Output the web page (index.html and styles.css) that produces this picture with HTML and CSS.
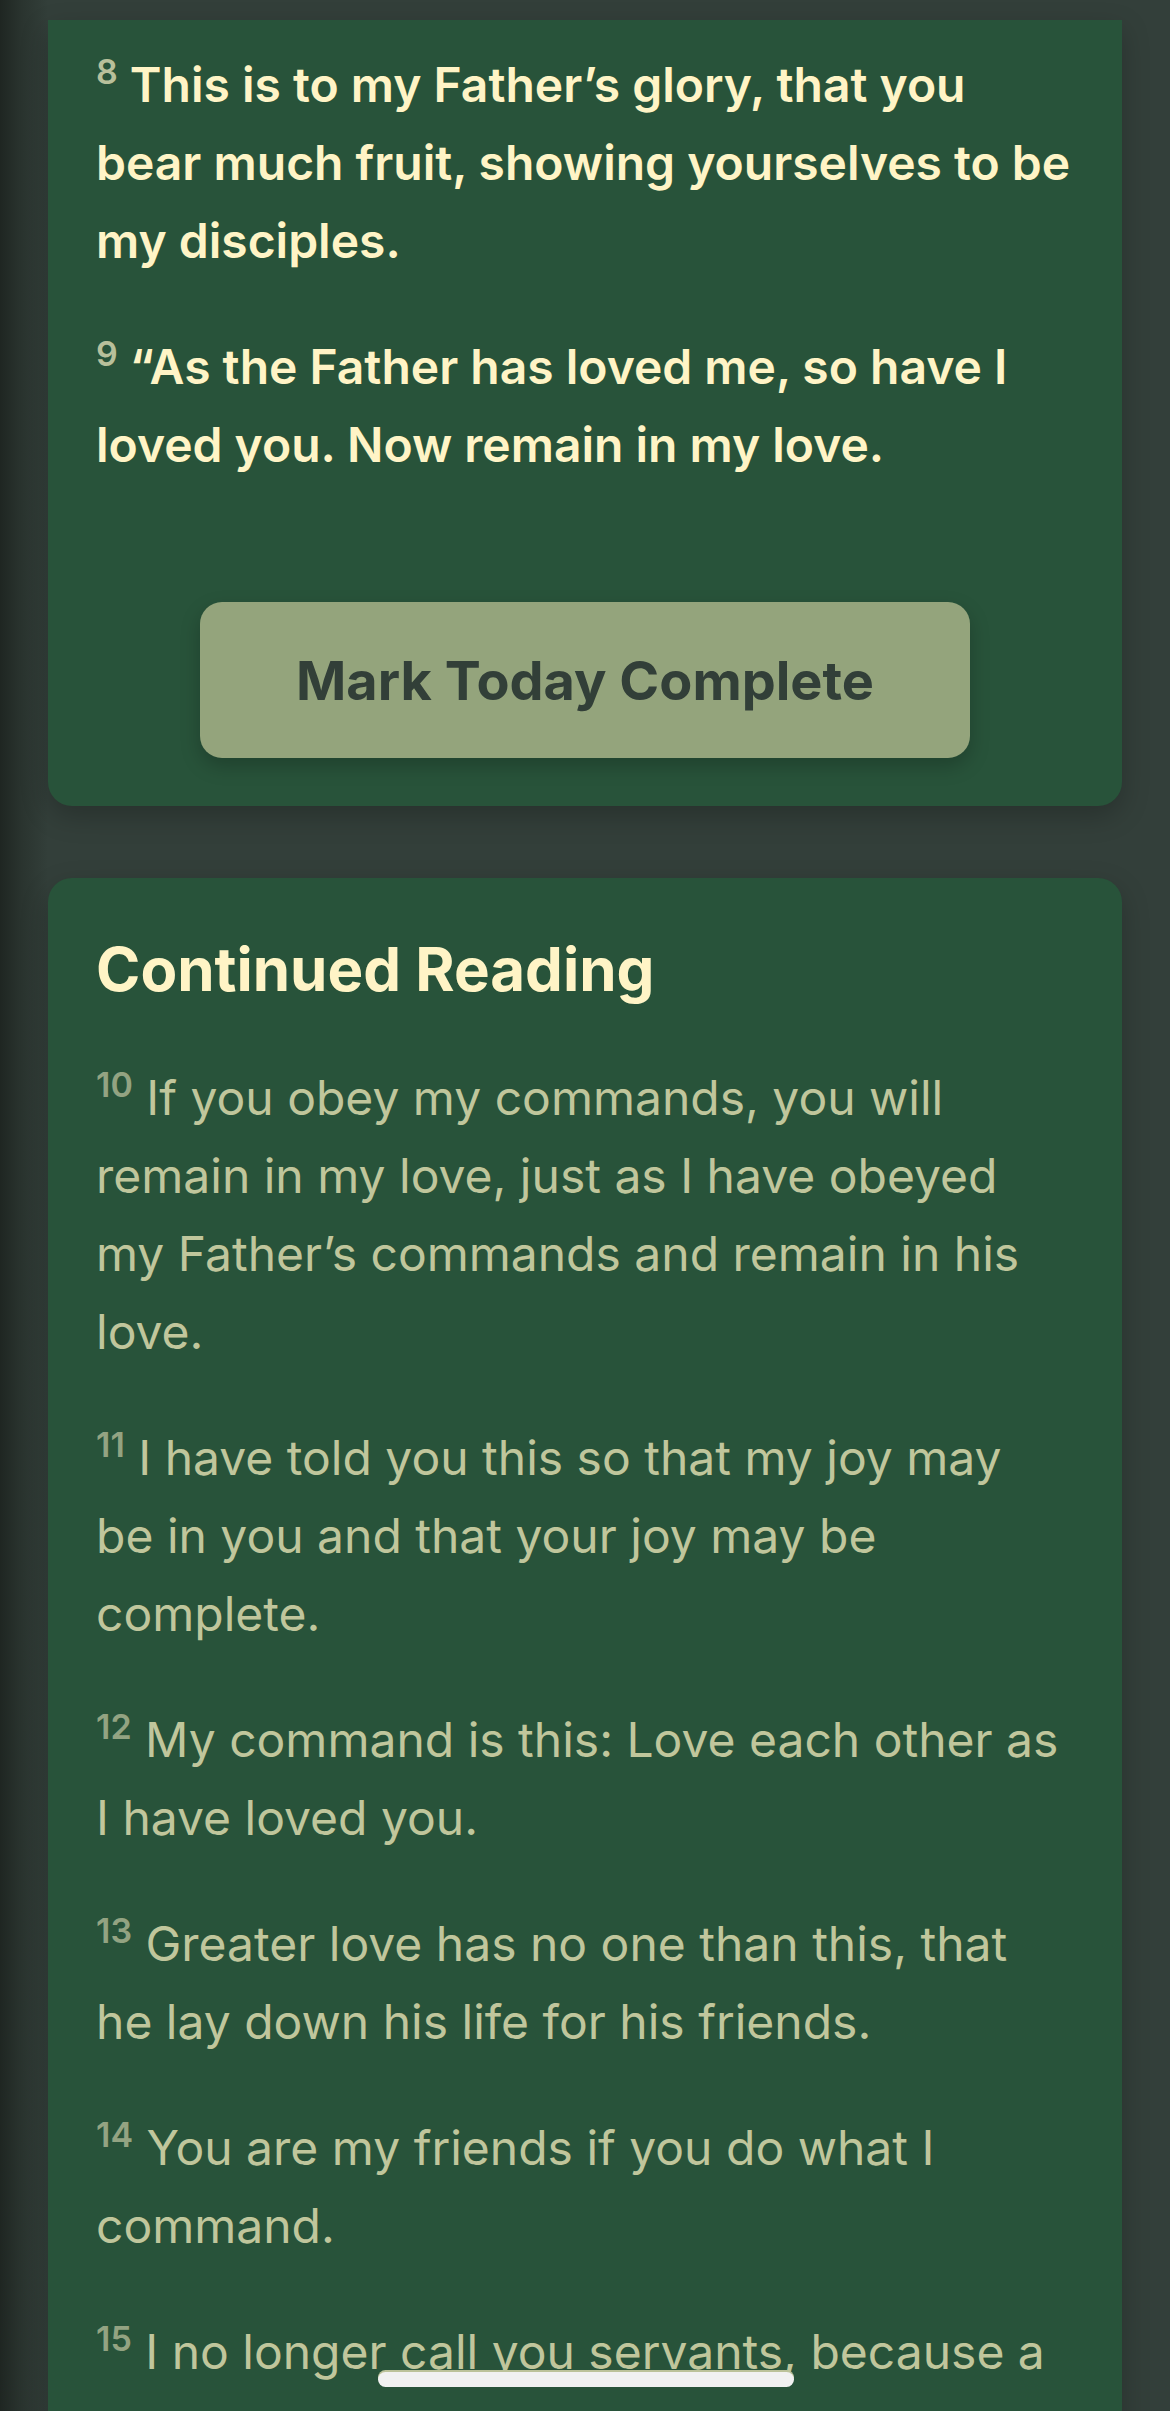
FILE: index.html
```html
<!DOCTYPE html>
<html lang="en">
<head>
<meta charset="utf-8">
<title>Reading</title>
<link rel="stylesheet" href="styles.css">
</head>
<body>
<main class="page">
  <section class="card card-today">
    <p class="verse verse-today"><sup class="num">8</sup> This is to my Father’s glory, that you bear much fruit, showing yourselves to be my disciples.</p>
    <p class="verse verse-today"><sup class="num">9</sup> “As the Father has loved me, so have I loved you. Now remain in my love.</p>
    <div class="actions">
      <button class="complete-btn" type="button">Mark Today Complete</button>
    </div>
  </section>

  <section class="card card-continued">
    <h2 class="card-title">Continued Reading</h2>
    <p class="verse verse-more"><sup class="num">10</sup> If you obey my commands, you will remain in my love, just as I have obeyed my Father’s commands and remain in his love.</p>
    <p class="verse verse-more"><sup class="num">11</sup> I have told you this so that my joy may be in you and that your joy may be complete.</p>
    <p class="verse verse-more"><sup class="num">12</sup> My command is this: Love each other as I have loved you.</p>
    <p class="verse verse-more"><sup class="num">13</sup> Greater love has no one than this, that he lay down his life for his friends.</p>
    <p class="verse verse-more"><sup class="num">14</sup> You are my friends if you do what I command.</p>
    <p class="verse verse-more"><sup class="num">15</sup> I no longer call you servants, because a servant does not know his master’s business. Instead, I have called you friends, for everything that I learned from my Father I have made known to you.</p>
  </section>
</main>
<div class="home-indicator"></div>
</body>
</html>
```

FILE: styles.css
```css
* {
  box-sizing: border-box;
}

html,
body {
  margin: 0;
  padding: 0;
  height: 2411px;
  overflow: hidden;
}

body {
  font-family: "Inter", "Noto Sans", "Liberation Sans", sans-serif;
  background: linear-gradient(to right, #1f2622 0px, #2a342f 22px, #333f3a 48px, #333f3a 100%);
  -webkit-font-smoothing: antialiased;
}

.page {
  padding: 20px 48px 0 48px;
  display: flex;
  flex-direction: column;
  gap: 72px;
}

.card {
  background: #28533a;
  border-radius: 24px;
  padding: 48px;
  box-shadow: 0 10px 28px rgba(0, 0, 0, 0.22);
}

.card-today {
  border-radius: 0 0 24px 24px;
  padding-top: 26px;
}

.verse {
  margin: 0 0 48px 0;
  font-size: 48px;
  line-height: 78px;
}

.verse-today {
  color: #fff4c6;
  font-weight: 600;
}

.verse-more {
  color: #c0c69c;
  font-weight: 400;
}

.num {
  font-size: 34px;
  line-height: 0;
  font-weight: 600;
  vertical-align: 18px;
}

.verse-today .num {
  color: #b8c09b;
}

.verse-more .num {
  color: #93a382;
}

.actions {
  display: flex;
  justify-content: center;
  padding-top: 70px;
}

.complete-btn {
  width: 770px;
  height: 156px;
  border: none;
  border-radius: 22px;
  background: #94a47c;
  color: #323f38;
  font-family: "Inter", "Noto Sans", "Liberation Sans", sans-serif;
  font-size: 54px;
  font-weight: 700;
  box-shadow: 0 8px 20px rgba(0, 0, 0, 0.22);
  cursor: pointer;
}

.card-continued {
  padding-top: 49px;
  padding-right: 56px;
}

.card-title {
  margin: 0 0 54px 0;
  padding-top: 6px;
  color: #fff4c6;
  font-size: 60px;
  font-weight: 700;
  line-height: 72px;
}

.home-indicator {
  position: fixed;
  left: 378px;
  top: 2372px;
  width: 416px;
  height: 15px;
  border-radius: 8px;
  background: #f1f1f1;
  box-shadow: 0 -2px 0 0 #bcc29a;
}
```
